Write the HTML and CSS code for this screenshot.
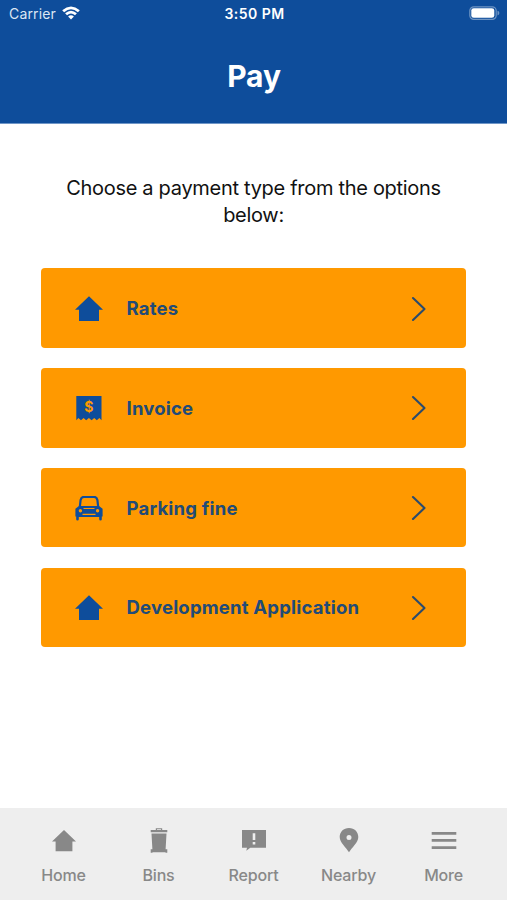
FILE: index.html
```html
<!DOCTYPE html>
<html lang="en">
<head>
<meta charset="utf-8">
<title>Pay</title>
<link rel="stylesheet" href="styles.css">
</head>
<body>
<svg class="defs" aria-hidden="true">
  <symbol id="house" viewBox="0 0 28 26"><path d="M14 0.3 28 13.8H24V25H4V13.8H0Z"/></symbol>
  <symbol id="chevron" viewBox="0 0 16 26"><path d="M2 2 13.5 13 2 24"/></symbol>
</svg>
<div class="app">
  <header class="header">
    <div class="status">
      <div class="carrier"><span>Carrier</span>
        <svg class="wifi" viewBox="0 0 18 14"><path d="M0.2 4.2Q9-3.2 17.8 4.2L15.9 6.2Q9 0.3 2.1 6.2Z"/><path d="M3.1 7.3Q9 2.2 14.9 7.3L13 9.3Q9 5.8 5 9.3Z"/><path d="M6.1 10.4Q9 8.1 11.9 10.4L9 13.4Z"/></svg>
      </div>
      <div class="time">3:50 PM</div>
      <svg class="battery" viewBox="0 0 31 15"><rect class="shell" x="0.8" y="0.8" width="26.4" height="12.6" rx="4"/><rect x="2.3" y="2.2" width="23" height="9.6" rx="2.4"/><path class="tip" d="M28.5 4.7Q30.4 5.2 30.4 7T28.5 9.4Z"/></svg>
    </div>
    <h1>Pay</h1>
  </header>
  <main class="content">
    <p class="intro">Choose a payment type from the options below:</p>
    <div class="cards">
      <a class="card"><svg class="icon"><use href="#house"/></svg><span>Rates</span><svg class="chevron"><use href="#chevron"/></svg></a>
      <a class="card"><svg class="icon" viewBox="0 0 28 26"><path d="M1.3 0H26.5V24.3L24.4 22 21.8 24.3 19.2 22 16.6 24.3 13.9 22 11.2 24.3 8.6 22 6 24.3 3.4 22 1.3 24.3Z"/><text class="dollar" x="13.8" y="16.4">$</text></svg><span>Invoice</span><svg class="chevron"><use href="#chevron"/></svg></a>
      <a class="card"><svg class="icon" viewBox="0 0 28 26"><path class="roof" d="M4.7 12 5.6 4Q6.3 0.9 9 0.9H19Q21.7 0.9 22.4 4L23.3 12"/><path fill-rule="evenodd" d="M4 9.9H24L27.6 12.8V20.6H26.8V23.2Q26.8 24.4 25.5 24.4T24.2 23.2V21.1H3.8V23.2Q3.8 24.4 2.5 24.4T1.2 23.2V20.6H0.4V12.8ZM5.4 13A1.7 1.7 0 1 0 5.4 16.4 1.7 1.7 0 1 0 5.4 13ZM22.6 13A1.7 1.7 0 1 0 22.6 16.4 1.7 1.7 0 1 0 22.6 13ZM7.5 17.8V18.9H20.5V17.8ZM8.5 12V13.1H19.5V12Z"/></svg><span>Parking fine</span><svg class="chevron"><use href="#chevron"/></svg></a>
      <a class="card"><svg class="icon"><use href="#house"/></svg><span>Development Application</span><svg class="chevron"><use href="#chevron"/></svg></a>
    </div>
  </main>
  <nav class="tabs">
    <a class="tab"><svg viewBox="0 0 28 28"><path d="M14 4 26 15.6H22.4V25.2H5.6V15.6H2Z"/></svg><span>Home</span></a>
    <a class="tab"><svg viewBox="0 0 28 28"><path d="M10.8 4V2.2H17.2V4H22.3V6.3H5.7V4ZM12 4H16V3.2H12ZM6.5 7.6H21.5L20.6 23.2H22.3V26.8H20.5V26.3H7.5V26.8H5.7V23.2H7.4Z" fill-rule="evenodd"/></svg><span>Bins</span></a>
    <a class="tab"><svg viewBox="0 0 28 28"><path fill-rule="evenodd" d="M2 4H26V21.7H10.3L6.3 24.8 7 21.7H2ZM12.7 7.3V14H15.3V7.3ZM12.7 16V18.5H15.3V16Z"/></svg><span>Report</span></a>
    <a class="tab"><svg viewBox="0 0 28 28"><path fill-rule="evenodd" d="M14 2.1C8.5 2.1 4.7 6 4.7 11.1 4.7 16.5 11 21.5 14 26.3 17 21.5 23.3 16.5 23.3 11.1 23.3 6 19.5 2.1 14 2.1ZM14 8.9A2.5 2.5 0 1 1 14 13.9 2.5 2.5 0 1 1 14 8.9Z"/></svg><span>Nearby</span></a>
    <a class="tab"><svg viewBox="0 0 28 28"><path d="M1.7 6H26.3V8.7H1.7ZM1.7 13H26.3V15.7H1.7ZM1.7 20.2H26.3V22.9H1.7Z"/></svg><span>More</span></a>
  </nav>
</div>
</body>
</html>
```
FILE: styles.css
```css
* { box-sizing: border-box; }
body { margin: 0; background: #fff; font-family: Inter, "Liberation Sans", sans-serif; }
.defs { display: none; }
.app { height: 900px; display: flex; flex-direction: column; }
.header { height: 124px; background: #0e4d9b; color: #fff; border-bottom: 1px solid #6f96c7; }
.status { height: 27px; display: grid; grid-template-columns: 1fr auto 1fr; align-items: center; padding: 0 7px 0 9px; font-size: 14px; }
.carrier { display: flex; align-items: center; gap: 6px; color: #dce6f3; letter-spacing: .15px; }
.wifi { width: 18px; height: 14px; fill: #fff; margin-top: -2px; }
.time { font-weight: 600; letter-spacing: .45px; }
.battery { width: 31px; height: 15px; justify-self: end; fill: #fff; }
.battery .shell { fill: none; stroke: #6e94c3; stroke-width: 1.2; }
.battery .tip { fill: #6e94c3; }
h1 { margin: 29px 0 0; padding-left: 1px; text-align: center; font-size: 30px; line-height: 40px; font-weight: 700; letter-spacing: -.1px; }
.content { flex: 1; padding: 51px 41px 0; }
.intro { margin: 0 auto; width: 390px; height: 54px; text-align: center; font-size: 20px; line-height: 27px; color: #111; letter-spacing: -.3px; }
.cards { margin-top: 39.3px; display: grid; gap: 20.3px; }
.card { height: 79.5px; display: flex; align-items: center; padding: 0 39px 0 34px; background: #ff9900; border-radius: 4px; color: #214b78; font-size: 18.5px; font-weight: 700; letter-spacing: .2px; }
.card span { flex: 1; margin-left: 23.5px; white-space: nowrap; }
.icon { width: 28px; height: 26px; margin-top: 2px; fill: #0e4d9b; }
.dollar { fill: #ff9900; font-size: 14px; font-weight: 700; text-anchor: middle; letter-spacing: 0; }
.roof { fill: none; stroke: #0e4d9b; stroke-width: 2.2; }
.chevron { width: 16px; height: 26px; margin-top: 1px; fill: none; stroke: #2b4b6d; stroke-width: 2.1; stroke-linecap: round; stroke-linejoin: round; }
.tabs { height: 92px; padding: 0 16px; background: #eee; display: grid; grid-template-columns: repeat(5, 1fr); color: #888; }
.tab { display: flex; flex-direction: column; align-items: center; padding-top: 18px; font-size: 16px; font-weight: 500; line-height: 20px; letter-spacing: -.2px; }
.tab svg { width: 28px; height: 28px; fill: #888; }
.tab span { margin-top: 11px; }
```
